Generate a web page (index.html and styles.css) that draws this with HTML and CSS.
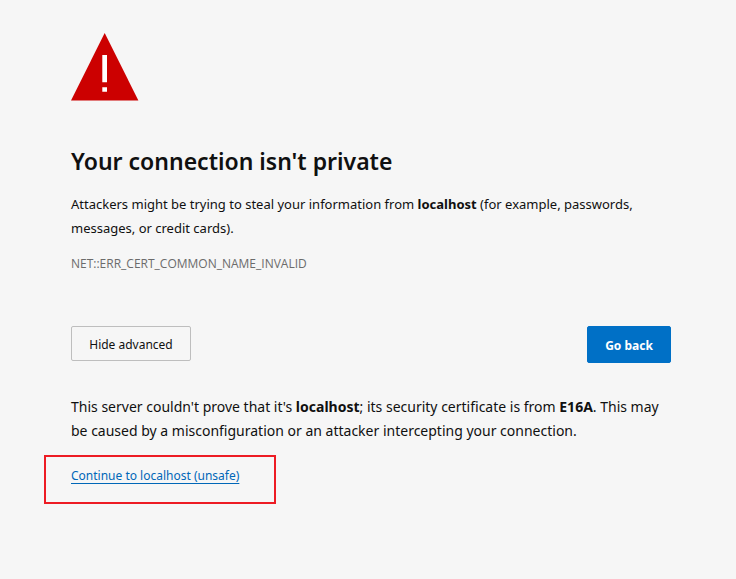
FILE: index.html
```html
<!DOCTYPE html>
<html lang="en">
<head>
<meta charset="utf-8">
<meta name="viewport" content="width=device-width, initial-scale=1">
<title>Privacy error</title>
<link rel="stylesheet" href="styles.css">
</head>
<body>
<main class="page">
  <svg class="warning" viewBox="0 0 68 68" aria-hidden="true">
    <path d="M33.700 0L67.400 67.400H0Z" fill="#c00"/>
    <path d="M31.300 22H36V49.300H31.300ZM31.300 54.300H36V58.700H31.300Z" fill="#fff"/>
  </svg>
  <h1 class="title">Your connection isn't private</h1>
  <p class="summary">Attackers might be trying to steal your information from <strong>localhost</strong> (for example, passwords, messages, or credit cards).</p>
  <p class="code">NET::ERR_CERT_COMMON_NAME_INVALID</p>
  <div class="actions">
    <button type="button" class="button">Hide advanced</button>
    <button type="button" class="button primary">Go back</button>
  </div>
  <p class="details">This server couldn't prove that it's <strong>localhost</strong>; its security certificate is from <strong>E16A</strong>. This may be caused by a misconfiguration or an attacker intercepting your connection.</p>
  <p class="proceed"><a class="link" href="#">Continue to localhost (unsafe)</a></p>
</main>
</body>
</html>
```

FILE: styles.css
```css
* { box-sizing: border-box; }
body {
  margin: 0;
  background: #f6f6f6;
  color: #101010;
  font-family: "Noto Sans", "Open Sans", sans-serif;
}
.page {
  max-width: 736px;
  margin: 0 auto;
  padding: 33px 65px 0 71px;
}
.warning { display: block; width: 68px; height: 68px; }
.title { margin: 44px 0 0; font-size: 23px; line-height: 32px; font-weight: 600; }
.summary { margin: 15px 0 0; font-size: 13px; line-height: 24px; }
.code { margin: 16px 0 0; color: #6b6b6b; font-family: "Open Sans", sans-serif; font-size: 12px; line-height: 16px; }
.actions { display: flex; justify-content: space-between; align-items: flex-start; margin-top: 54px; }
.button {
  min-width: 120px;
  height: 35px;
  padding: 2px 16px 0;
  border: 1px solid #bebebe;
  border-radius: 2px;
  background: #f6f6f6;
  color: #101010;
  font-family: inherit;
  font-size: 12px;
}
.primary { min-width: 84px; height: 37px; border-color: #0070c6; background: #0070c6; color: #fff; font-weight: 700; }
.details { margin: 32px 0 0; font-size: 14px; line-height: 24px; }
.proceed {
  width: fit-content;
  min-width: 232px;
  margin: 12px 0 0 -27px;
  padding: 7px 25px 14px;
  border: 2px solid #ed1c24;
  font-size: 12px;
  line-height: 24px;
}
.link { color: #0067b8; text-underline-offset: 3px; }
```
